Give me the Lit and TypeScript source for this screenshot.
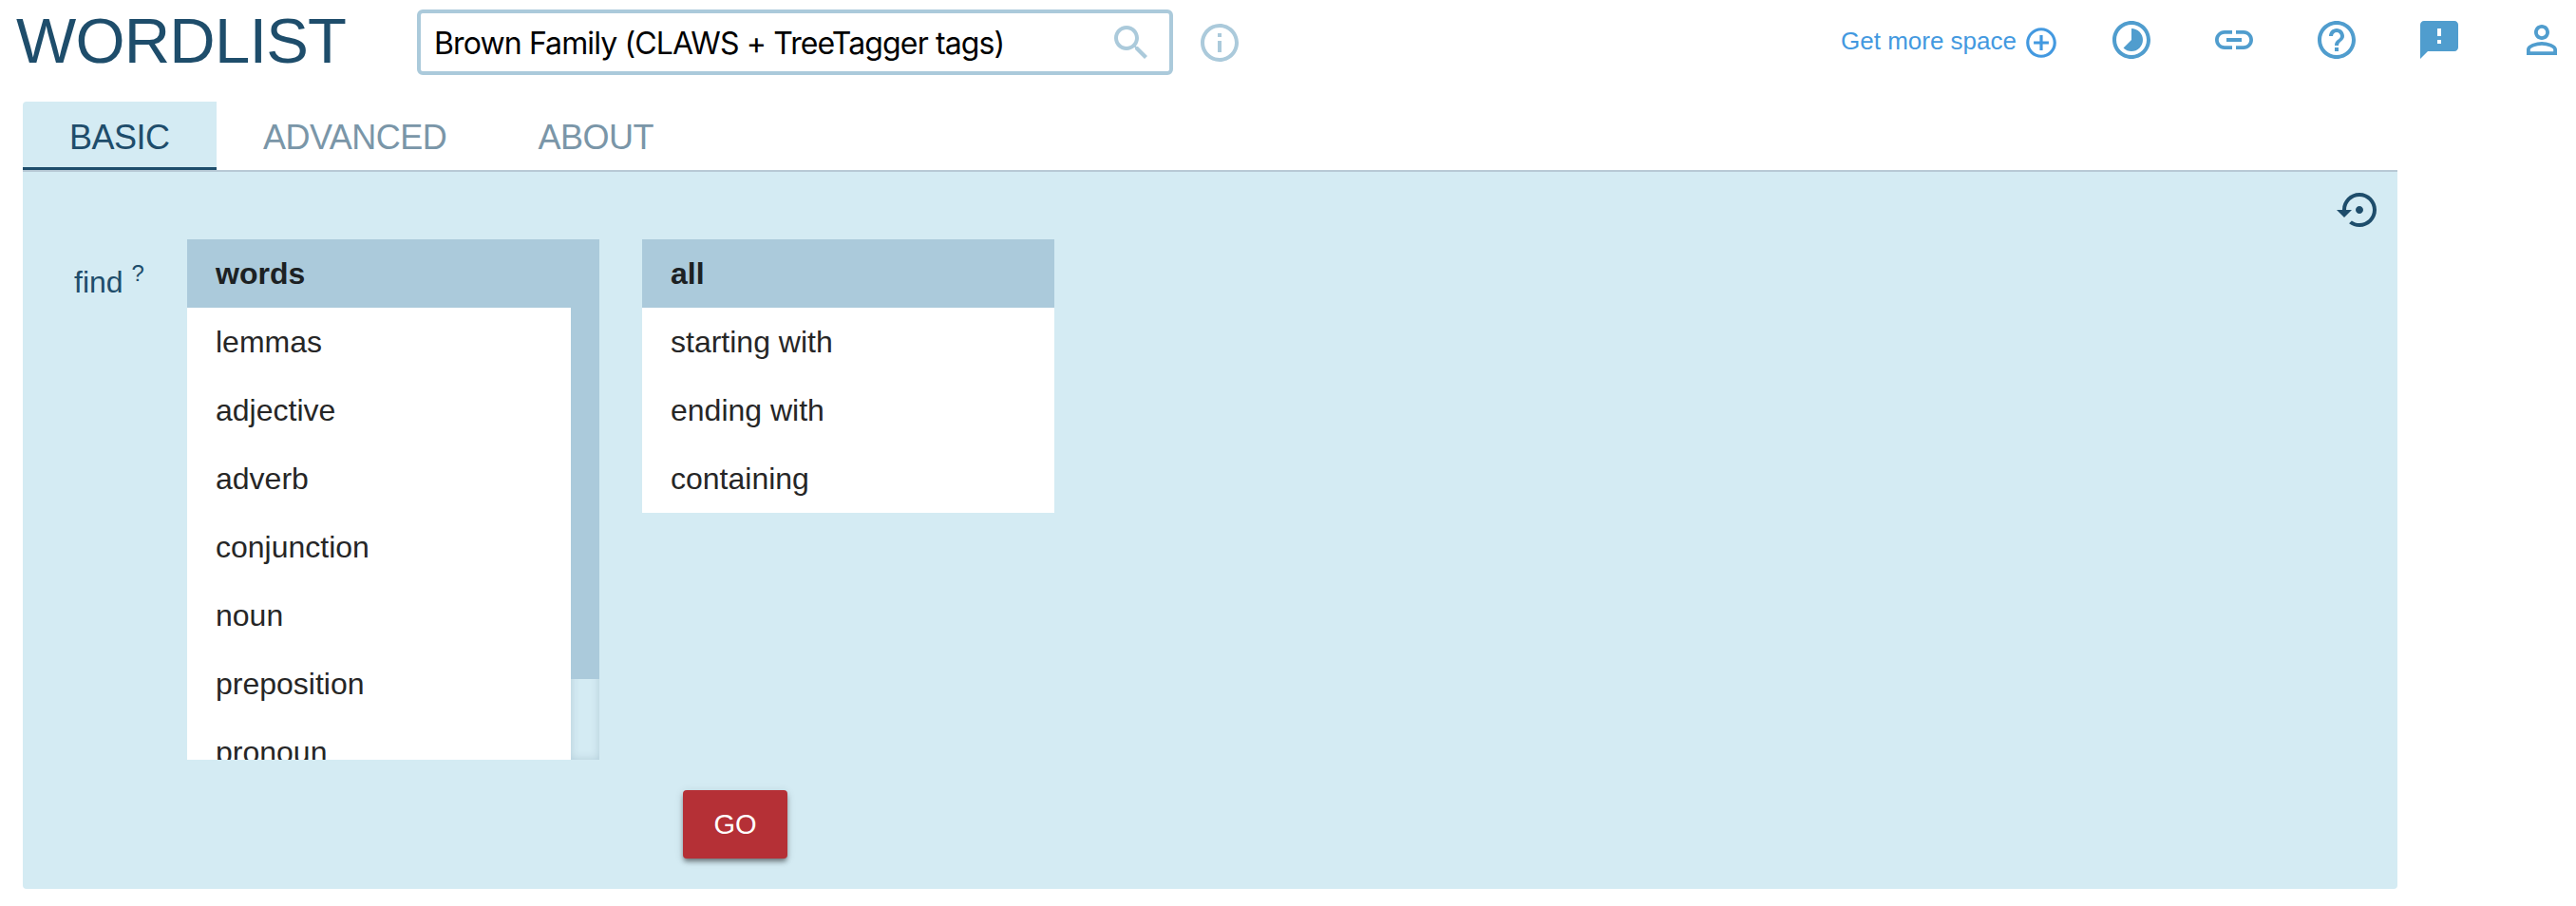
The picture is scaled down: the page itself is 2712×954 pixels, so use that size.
import { LitElement, html, css, svg } from "lit";
import { customElement, property, state } from "lit/decorators.js";

const RING = "M12 2C6.48 2 2 6.48 2 12s4.48 10 10 10 10-4.48 10-10S17.52 2 12 2zm0 18c-4.41 0-8-3.59-8-8s3.59-8 8-8 8 3.59 8 8-3.59 8-8 8z";

const ICONS: Record<string, string> = {
  search: "M15.5 14h-.79l-.28-.27C15.41 12.59 16 11.11 16 9.5 16 5.91 13.09 3 9.5 3S3 5.91 3 9.5 5.91 16 9.5 16c1.61 0 3.09-.59 4.23-1.57l.27.28v.79l5 4.99L20.49 19l-4.99-5zm-6 0C7.01 14 5 11.99 5 9.5S7.01 5 9.5 5 14 7.01 14 9.5 11.99 14 9.5 14z",
  info: RING + "M11 7h2v2h-2zM11 11h2v6h-2z",
  add: RING + "M13 7h-2v4H7v2h4v4h2v-4h4v-2h-4z",
  timelapse: RING + "M16.24 7.76C15.07 6.59 13.54 6 12 6v6l-4.24 4.24c2.34 2.34 6.14 2.34 8.49 0 2.34-2.34 2.34-6.14-.01-8.48z",
  link: "M3.9 12c0-1.71 1.39-3.1 3.1-3.1h4V7H7c-2.76 0-5 2.24-5 5s2.24 5 5 5h4v-1.9H7c-1.71 0-3.1-1.39-3.1-3.1zM8 13h8v-2H8v2zm9-6h-4v1.9h4c1.71 0 3.1 1.39 3.1 3.1s-1.39 3.1-3.1 3.1h-4V17h4c2.76 0 5-2.24 5-5s-2.24-5-5-5z",
  help: RING + "M11 18h2v-2h-2v2zm1-12c-2.21 0-4 1.79-4 4h2c0-1.1.9-2 2-2s2 .9 2 2c0 2-3 1.75-3 5h2c0-2.25 3-2.5 3-5 0-2.21-1.79-4-4-4z",
  feedback: "M20 2H4c-1.1 0-1.99.9-1.99 2L2 22l4-4h14c1.1 0 2-.9 2-2V4c0-1.1-.9-2-2-2zm-7 12h-2v-2h2v2zm0-4h-2V6h2v4z",
  person: "M12 5.9c1.16 0 2.1.94 2.1 2.1s-.94 2.1-2.1 2.1S9.9 9.16 9.9 8s.94-2.1 2.1-2.1m0 9c2.97 0 6.1 1.46 6.1 2.1v1.1H5.9V17c0-.64 3.13-2.1 6.1-2.1M12 4C9.79 4 8 5.79 8 8s1.79 4 4 4 4-1.79 4-4-1.79-4-4-4zm0 9c-2.67 0-8 1.34-8 4v3h16v-3c0-2.66-5.33-4-8-4z",
  restore: "M14 12c0-1.1-.9-2-2-2s-2 .9-2 2 .9 2 2 2 2-.9 2-2zm-2-9c-4.97 0-9 4.03-9 9H0l4 4 4-4H5c0-3.87 3.13-7 7-7s7 3.13 7 7-3.13 7-7 7c-1.51 0-2.91-.49-4.06-1.3l-1.42 1.44C8.04 20.3 9.94 21 12 21c4.97 0 9-4.03 9-9s-4.03-9-9-9z",
};

@customElement("md-icon")
class MdIcon extends LitElement {
  @property() name = "";
  static styles = css`
    :host { display: block; width: 48px; height: 48px; flex: none; }
    svg { display: block; width: 100%; height: 100%; fill: currentColor; }
  `;
  render() {
    return html`<svg viewBox="0 0 24 24">${svg`<path d=${ICONS[this.name] ?? ""} />`}</svg>`;
  }
}

@customElement("option-list")
class OptionList extends LitElement {
  @property({ attribute: false }) options: string[] = [];
  @property() selected = "";
  @property({ type: Boolean }) scrollable = false;
  static styles = css`
    :host { display: flex; width: 434px; flex: none; overflow: hidden; }
    .items { flex: 1; background: #fff; }
    .item { height: 72px; line-height: 73px; padding-left: 30px; font-size: 32px; color: #262626; white-space: nowrap; }
    .item.selected { background: #abcadb; color: #1c2123; font-weight: bold; }
    .track { width: 30px; background: #d4ebf3; box-shadow: inset 0 0 10px rgba(0, 50, 80, 0.16); }
    .thumb { height: 463px; background: #abcadb; }
  `;
  render() {
    return html`
      <div class="items">
        ${this.options.map((o) => html`
          <div class="item ${o === this.selected ? "selected" : ""}" @click=${() => (this.selected = o)}>${o}</div>`)}
      </div>
      ${this.scrollable ? html`<div class="track"><div class="thumb"></div></div>` : null}
    `;
  }
}

@customElement("app-root")
class AppRoot extends LitElement {
  @state() private tab = "BASIC";
  static styles = css`
    :host { display: block; width: 2712px; height: 954px; overflow: hidden; background: #fff;
      font-family: "Liberation Sans", Arial, Helvetica, sans-serif; color: #1e4d6b; }
    * { box-sizing: border-box; }
    .header { display: flex; height: 107px; align-items: flex-start; }
    .title { margin: 0; width: 439px; padding: 5px 0 0 17px; font-size: 67px; line-height: 76px; letter-spacing: -0.8px; font-weight: normal; white-space: nowrap; }
    .corpus { display: flex; align-items: center; width: 796px; height: 69px; margin-top: 10px; padding: 0 16px 0 14px;
      border: 4px solid #abcadb; border-radius: 6px; }
    .corpus span { flex: 1; padding-top: 2px; font: 32px/40px Inter, sans-serif; color: #000; letter-spacing: -0.88px; white-space: nowrap; }
    .light { color: #abcadb; }
    .info { margin: 21px 0 0 25px; }
    .actions { display: flex; align-items: flex-start; gap: 60px; margin-left: auto; padding: 18px 12px 0 0; color: #509dce; }
    .space { display: flex; align-items: center; gap: 7px; margin: 8px -8px 0 0; height: 38px; color: #4399e0; font-size: 26px; white-space: nowrap; }
    .space span { padding-bottom: 3px; }
    .space md-icon { width: 38px; height: 38px; }
    .main { width: 2500px; margin-left: 24px; }
    .tabs { display: flex; height: 74px; border-bottom: 2px solid #b8c9d5; }
    .tab { height: 72px; min-width: 204px; padding: 0 47px 0 49px; font-size: 36px; line-height: 75px; letter-spacing: -0.5px; color: #7a96a8; white-space: nowrap; }
    .tab.active { background: #d4ebf3; color: #1e4d6b; border-bottom: 3px solid #1e4d6b; border-radius: 4px 0 0 0; }
    .panel { display: flex; flex-direction: column; height: 755px; background: #d4ebf3; border-radius: 0 0 4px 4px; }
    .form { display: flex; align-items: flex-start; height: 619px; padding-top: 71px; }
    .find { width: 173px; padding: 27px 0 0 54px; font-size: 32px; line-height: 37px; white-space: nowrap; }
    .find sup { font-size: 24px; line-height: 0; vertical-align: 12px; }
    .words { height: 548px; margin-right: 45px; }
    .reset { margin: -55px 16px 0 auto; }
    .go { width: 110px; height: 72px; margin: 32px 0 0 695px; padding: 0; border: 0; border-radius: 4px; background: #b53036; color: #fff;
      font: 29px/72px "Liberation Sans", Arial, sans-serif; box-shadow: 0 4px 5px rgba(0,0,0,.2), 0 2px 10px rgba(0,0,0,.14), 0 4px 4px -2px rgba(0,0,0,.3); }
  `;
  render() {
    return html`
      <header class="header">
        <h1 class="title">WORDLIST</h1>
        <div class="corpus"><span>Brown Family (CLAWS + TreeTagger tags)</span><md-icon class="light" name="search"></md-icon></div>
        <md-icon class="light info" name="info"></md-icon>
        <nav class="actions">
          <div class="space"><span>Get more space</span><md-icon name="add"></md-icon></div>
          ${["timelapse", "link", "help", "feedback", "person"].map((n) => html`<md-icon name=${n}></md-icon>`)}
        </nav>
      </header>
      <main class="main">
        <div class="tabs">
          ${["BASIC", "ADVANCED", "ABOUT"].map((t) => html`
            <div class="tab ${t === this.tab ? "active" : ""}" @click=${() => (this.tab = t)}>${t}</div>`)}
        </div>
        <section class="panel">
          <div class="form">
            <div class="find">find <sup>?</sup></div>
            <option-list class="words" scrollable selected="words"
              .options=${["words", "lemmas", "adjective", "adverb", "conjunction", "noun", "preposition", "pronoun"]}></option-list>
            <option-list selected="all" .options=${["all", "starting with", "ending with", "containing"]}></option-list>
            <md-icon class="reset" name="restore"></md-icon>
          </div>
          <button class="go">GO</button>
        </section>
      </main>
    `;
  }
}
